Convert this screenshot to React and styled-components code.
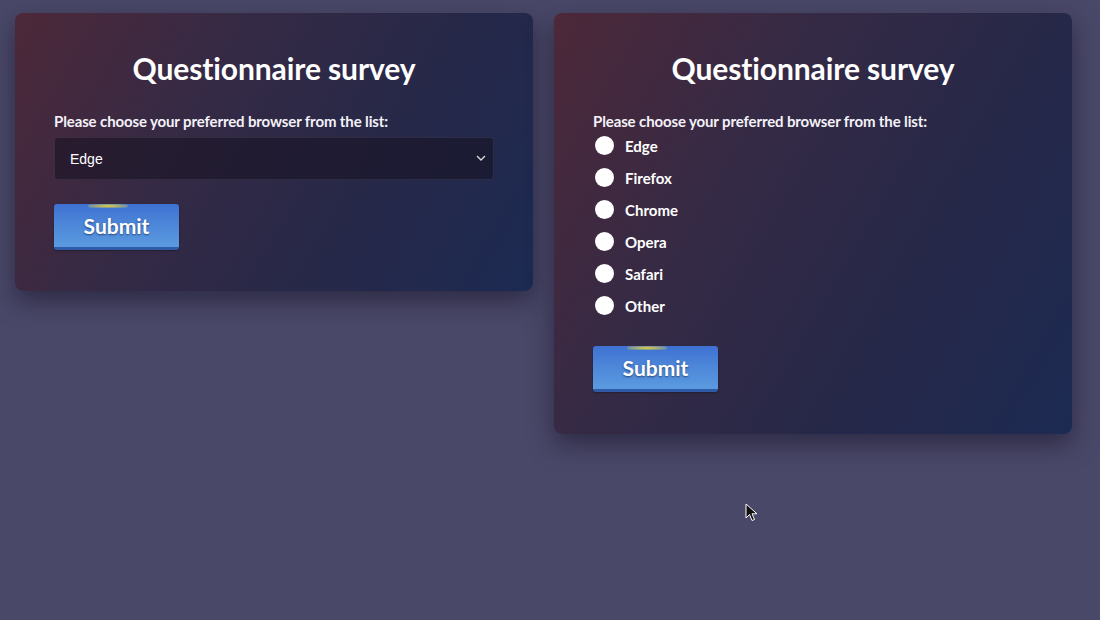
import React, { useState } from 'react';
import styled, { createGlobalStyle } from 'styled-components';

const GlobalStyle = createGlobalStyle`
  html, body {
    margin: 0;
    padding: 0;
    background: #4a4868;
    font-family: Lato, "Open Sans", sans-serif;
  }
`;

const browsers = ['Edge', 'Firefox', 'Chrome', 'Opera', 'Safari', 'Other'];

// --- 스타일 --- //

const Page = styled.div`
  position: relative;
  width: 1100px;
  height: 620px;
  box-sizing: border-box;
  padding: 13px 0 0 15px;
  display: flex;
  align-items: flex-start;
  gap: 21px;
  overflow: hidden;
`;

const Card = styled.form`
  width: 518px;
  box-sizing: border-box;
  padding: 35px 39px ${(p) => p.$bottom}px;
  border-radius: 8px;
  background: linear-gradient(120deg, #4d2839 0%, #352a45 35%, #272848 65%, #1c2a52 100%);
  box-shadow: 0 10px 24px rgba(20, 18, 40, 0.55);
  color: #fff;
`;

const Title = styled.h1`
  margin: 0 0 23px;
  text-align: center;
  font-size: 30px;
  font-weight: 700;
  line-height: 40px;
  letter-spacing: -0.1px;
`;

const Label = styled.div`
  font-size: 15px;
  font-weight: 700;
  line-height: 20px;
  letter-spacing: -0.12px;
  margin-bottom: ${(p) => p.$gap}px;
  color: #f4f2f8;
`;

const SelectWrap = styled.div`
  position: relative;
  height: 43px;
  box-sizing: border-box;
  border: 1px solid rgba(255, 255, 255, 0.08);
  border-radius: 4px;
  background: rgba(22, 16, 32, 0.55);
  display: flex;
  align-items: center;
  padding: 0 15px;
  font-family: "Liberation Sans", Arial, sans-serif;
  font-size: 14px;
  color: #fff;

  svg {
    position: absolute;
    right: 7px;
    top: 16px;
  }
`;

const RadioList = styled.div`
  display: flex;
  flex-direction: column;
  gap: 13px;
`;

const RadioRow = styled.label`
  display: flex;
  align-items: center;
  gap: 11px;
  height: 19px;
  font-size: 15px;
  font-weight: 700;
  cursor: pointer;
`;

const Dot = styled.span`
  width: 19px;
  height: 19px;
  border-radius: 50%;
  background: #fff;
  margin-left: 2px;
  box-sizing: border-box;
  border: ${(p) => (p.$on ? '5px solid #3b6fd0' : 'none')};
`;

const SubmitButton = styled.button`
  position: relative;
  margin-top: ${(p) => p.$top}px;
  width: 125px;
  height: 46px;
  border: none;
  border-radius: 3px;
  border-bottom: 3px solid #2e5aa8;
  background: linear-gradient(180deg, #3e71d2 0%, #4f8ada 55%, #5b9ae0 100%);
  color: #fff;
  font-family: Lato, "Open Sans", sans-serif;
  font-size: 21px;
  font-weight: 700;
  text-shadow: 0 1px 2px rgba(10, 20, 60, 0.6);
  cursor: pointer;
  box-shadow: 0 1px 2px rgba(0, 0, 0, 0.3);

  &::before {
    content: '';
    position: absolute;
    top: 0;
    left: 34px;
    width: 40px;
    height: 4px;
    border-radius: 2px;
    background: radial-gradient(ellipse at center, #e7d23a 0%, rgba(231, 210, 58, 0.5) 50%, rgba(231, 210, 58, 0) 100%);
  }
`;

const Cursor = styled.svg`
  position: absolute;
  left: 745px;
  top: 503px;
`;

function SelectCard() {
  return (
    <Card $bottom={41}>
      <Title>Questionnaire survey</Title>
      <Label $gap={6}>Please choose your preferred browser from the list:</Label>
      <SelectWrap>
        Edge
        <svg width="10" height="8" viewBox="0 0 10 8">
          <path d="M1 2 L5 6 L9 2" fill="none" stroke="#ddd" strokeWidth="1.3" />
        </svg>
      </SelectWrap>
      <SubmitButton type="button" $top={24}>Submit</SubmitButton>
    </Card>
  );
}

function RadioCard() {
  const [picked, setPicked] = useState(null);
  return (
    <Card $bottom={42}>
      <Title>Questionnaire survey</Title>
      <Label $gap={5}>Please choose your preferred browser from the list:</Label>
      <RadioList>
        {browsers.map((b) => (
          <RadioRow key={b} onClick={() => setPicked(b)}>
            <Dot $on={picked === b} />
            {b}
          </RadioRow>
        ))}
      </RadioList>
      <SubmitButton type="button" $top={31}>Submit</SubmitButton>
    </Card>
  );
}

export default function App() {
  return (
    <>
      <GlobalStyle />
      <Page>
        <SelectCard />
        <RadioCard />
        <Cursor width="14" height="20" viewBox="0 0 14 20">
          <path d="M1 1 L1 15 L4.5 11.5 L7 17.5 L9.5 16.5 L7 10.8 L12 10.8 Z" fill="#111" stroke="#fff" strokeWidth="1" />
        </Cursor>
      </Page>
    </>
  );
}
